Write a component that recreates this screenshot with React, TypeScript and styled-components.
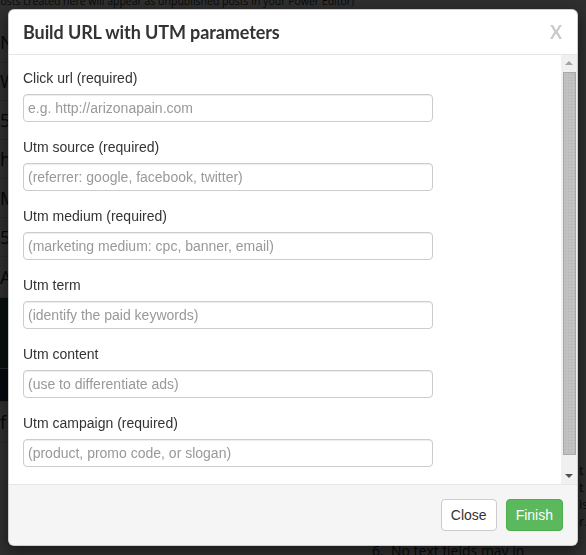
import React from "react";
import styled, { createGlobalStyle } from "styled-components";

const Global = createGlobalStyle`
  html, body { margin: 0; padding: 0; }
  body {
    width: 586px;
    height: 555px;
    overflow: hidden;
    background: #ffffff;
    font-family: "Liberation Sans", Arial, sans-serif;
    color: #333;
  }
`;

/* ---------- background page (dimmed) ---------- */
const Page = styled.div`
  position: relative;
  width: 586px;
  height: 555px;
  overflow: hidden;
  font-family: "Open Sans", "Liberation Sans", sans-serif;
  color: #333;
`;

const TopNote = styled.div`
  margin-top: -6px;
  margin-left: -6px;
  font-size: 10.5px;
  line-height: 14px;
  white-space: nowrap;
`;

const SideTable = styled.div`
  margin-top: 14px;
  width: 60px;
  display: flex;
  flex-direction: column;
`;

const SideRow = styled.div<{ $h: number; $bg?: string }>`
  height: ${(p) => p.$h}px;
  border-bottom: 1px solid #ddd;
  background: ${(p) => p.$bg || "transparent"};
  font-size: 18px;
  line-height: ${(p) => p.$h}px;
  color: #222;
  white-space: nowrap;
`;

const BottomNote = styled.div`
  position: absolute;
  left: 372px;
  top: 542px;
  font-size: 14px;
  line-height: 18px;
  white-space: nowrap;
  color: #333;
`;

const RightNote = styled.div`
  position: absolute;
  left: 579px;
  top: 462px;
  font-size: 13px;
  line-height: 17px;
  white-space: nowrap;
`;

const Backdrop = styled.div`
  position: fixed;
  inset: 0;
  background: rgba(0, 0, 0, 0.82);
`;

/* ---------- modal ---------- */
const Modal = styled.div`
  position: fixed;
  left: 8px;
  top: 9px;
  width: 570px;
  height: 537px;
  box-sizing: border-box;
  background: #fff;
  border: 1px solid rgba(0, 0, 0, 0.2);
  border-radius: 6px;
  box-shadow: 0 5px 15px rgba(0, 0, 0, 0.5);
  display: flex;
  flex-direction: column;
  overflow: hidden;
`;

const Header = styled.div`
  display: flex;
  align-items: center;
  justify-content: space-between;
  height: 45px;
  box-sizing: border-box;
  padding: 0 15px 0 14px;
  border-bottom: 1px solid #e5e5e5;
  flex: none;
`;

const Title = styled.h4`
  margin: 0;
  font-family: Lato, "Noto Sans", sans-serif;
  font-weight: 700;
  font-size: 18px;
  line-height: 20px;
  letter-spacing: -0.1px;
  color: #333;
`;

const CloseX = styled.span`
  font-family: Lato, "Noto Sans", sans-serif;
  font-weight: 700;
  font-size: 18px;
  line-height: 20px;
  color: #cacaca;
`;

const Body = styled.div`
  flex: 1;
  min-height: 0;
  display: flex;
`;

const Content = styled.div`
  flex: 1;
  overflow: hidden;
  padding: 13px 15px 15px 14px;
`;

const ScrollBar = styled.div`
  flex: none;
  width: 16px;
  display: flex;
  flex-direction: column;
  background: #f0f0f0;
`;

const ArrowButton = styled.div`
  flex: none;
  height: 16px;
  display: flex;
  align-items: center;
  justify-content: center;
`;

const Arrow = styled.span<{ $down?: boolean; $color: string }>`
  width: 0;
  height: 0;
  border-left: 4px solid transparent;
  border-right: 4px solid transparent;
  ${(p) =>
    p.$down
      ? `border-top: 4px solid ${p.$color};`
      : `border-bottom: 4px solid ${p.$color};`}
`;

const Track = styled.div`
  flex: 1;
  padding: 1px 1px 0 2px;
`;

const Thumb = styled.div`
  height: 383px;
  box-sizing: border-box;
  background-color: #c1c1c1;
  background-image: radial-gradient(#b3b3b3 0.7px, transparent 0.9px);
  background-size: 3px 3px;
  border: 1px solid #a8a8a8;
`;

const Group = styled.div`
  margin-bottom: 15px;
`;

const Label = styled.label`
  display: block;
  font-size: 14px;
  line-height: 20px;
  margin-bottom: 6px;
  color: #333;
`;

const Input = styled.input`
  display: block;
  width: 410px;
  height: 28px;
  box-sizing: border-box;
  padding: 0 4px;
  font-family: "Liberation Sans", Arial, sans-serif;
  font-size: 14px;
  color: #555;
  border: 1px solid #ccc;
  border-radius: 4px;
  box-shadow: inset 0 1px 1px rgba(0, 0, 0, 0.075);
  outline: none;
  &::placeholder {
    color: #999;
  }
`;

const Footer = styled.div`
  flex: none;
  display: flex;
  justify-content: flex-end;
  gap: 9px;
  padding: 14px 14px 14px 15px;
  border-top: 1px solid #e5e5e5;
  background: #f5f5f5;
`;

const Button = styled.button<{ $primary?: boolean }>`
  font-family: "Liberation Sans", Arial, sans-serif;
  font-size: 14px;
  line-height: 20px;
  padding: 5px 9px;
  border-radius: 4px;
  border: 1px solid ${(p) => (p.$primary ? "#4cae4c" : "#ccc")};
  background: ${(p) => (p.$primary ? "#5cb85c" : "#fff")};
  color: ${(p) => (p.$primary ? "#fff" : "#333")};
  cursor: pointer;
`;

const fields = [
  { label: "Click url (required)", ph: "e.g. http://arizonapain.com" },
  { label: "Utm source (required)", ph: "(referrer: google, facebook, twitter)" },
  { label: "Utm medium (required)", ph: "(marketing medium: cpc, banner, email)" },
  { label: "Utm term", ph: "(identify the paid keywords)" },
  { label: "Utm content", ph: "(use to differentiate ads)" },
  { label: "Utm campaign (required)", ph: "(product, promo code, or slogan)" },
];

export default function App() {
  return (
    <>
      <Global />
      <Page>
        <TopNote>
          posts created here will appear as unpublished posts in your Power Editor)
        </TopNote>
        <SideTable>
          <SideRow $h={40}>N</SideRow>
          <SideRow $h={37}>W</SideRow>
          <SideRow $h={38}>5C</SideRow>
          <SideRow $h={38}>ht</SideRow>
          <SideRow $h={38}>M</SideRow>
          <SideRow $h={38}>55</SideRow>
          <SideRow $h={40}>A</SideRow>
          <SideRow $h={70} $bg="#34594f" />
          <SideRow $h={32} $bg="#1c3858" />
          <SideRow $h={40}>f y</SideRow>
        </SideTable>
        <RightNote>
          t<br />t<br />is<br />r.
        </RightNote>
        <BottomNote>6.&nbsp;&nbsp;No text fields may in</BottomNote>
      </Page>
      <Backdrop />
      <Modal>
        <Header>
          <Title>Build URL with UTM parameters</Title>
          <CloseX>X</CloseX>
        </Header>
        <Body>
          <Content>
            {fields.map((f) => (
              <Group key={f.label}>
                <Label>{f.label}</Label>
                <Input placeholder={f.ph} />
              </Group>
            ))}
          </Content>
          <ScrollBar aria-hidden="true">
            <ArrowButton>
              <Arrow $color="#a3a3a3" />
            </ArrowButton>
            <Track>
              <Thumb />
            </Track>
            <ArrowButton>
              <Arrow $down $color="#505050" />
            </ArrowButton>
          </ScrollBar>
        </Body>
        <Footer>
          <Button>Close</Button>
          <Button $primary>Finish</Button>
        </Footer>
      </Modal>
    </>
  );
}
